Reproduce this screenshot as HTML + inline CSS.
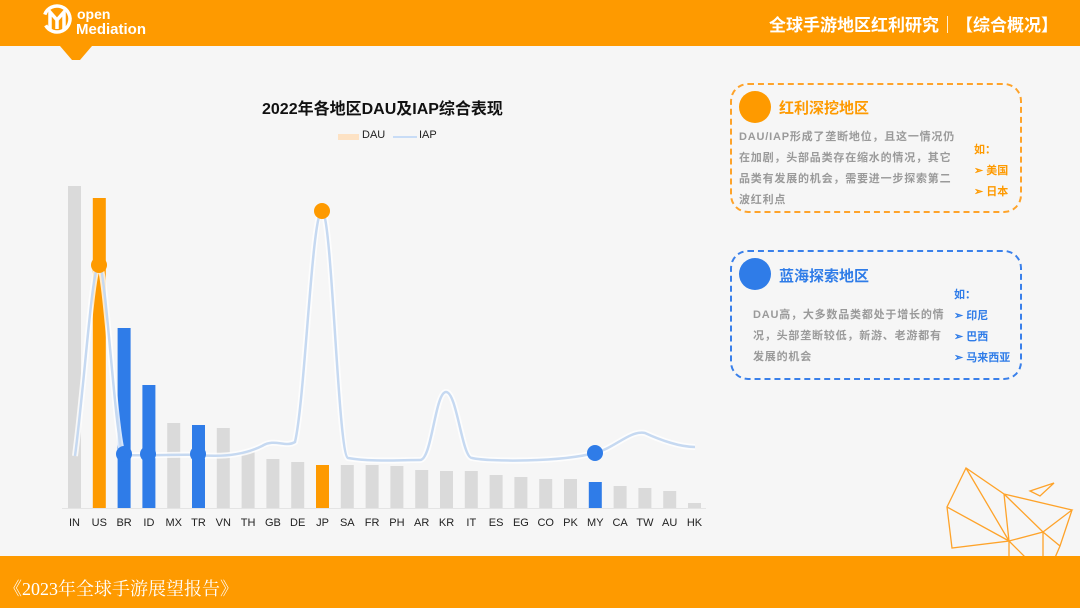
<!DOCTYPE html>
<html><head><meta charset="utf-8"><style>
body{margin:0;width:1080px;height:608px;overflow:hidden;background:#f6f6f6;font-family:"Liberation Sans","Noto Sans CJK SC",sans-serif;position:relative}
.hd{position:absolute;left:0;top:0;width:1080px;height:46px;background:#fe9a00}
.ft{position:absolute;left:0;top:556px;width:1080px;height:52px;background:#fe9a00}
.box{position:absolute;border:2px dashed;border-radius:18px;box-sizing:border-box}
.t{position:absolute;font-weight:bold;white-space:nowrap}
.bt{position:absolute;font-size:11px;line-height:21px;color:#9a9a9a;font-weight:bold;white-space:nowrap;letter-spacing:0.8px}
</style></head><body>
<div class="hd"></div>
<svg style="position:absolute;left:0;top:0" width="1080" height="70">
<polygon points="60,46 92,46 80,60 72,60" fill="#fe9a00"/>
<circle cx="57" cy="19" r="13" fill="none" stroke="#fff" stroke-width="3.5" stroke-dasharray="70 12" transform="rotate(200 57 19)"/>
<path d="M50 29 V12 L57 20 L64 12 V29 M57 20 V29" fill="none" stroke="#fff" stroke-width="3.5"/>
<text x="77" y="19" fill="#fff" font-size="14" font-weight="bold" font-family="Liberation Sans">open</text>
<text x="76" y="34" fill="#fff" font-size="15" font-weight="bold" font-family="Liberation Sans">Mediation</text>
</svg>
<div class="t" style="right:22px;top:11px;color:#fff;font-size:17px">全球手游地区红利研究｜【综合概况】</div>
<div class="t" style="left:262px;top:95px;color:#111;font-size:16px">2022年各地区DAU及IAP综合表现</div>
<div style="position:absolute;left:338px;top:134px;width:21px;height:6px;background:#fde2c4"></div>
<div class="t" style="left:362px;top:129px;font-size:11px;color:#222;font-weight:normal">DAU</div>
<div style="position:absolute;left:393px;top:136px;width:24px;height:2px;background:#c8dcf6"></div>
<div class="t" style="left:419px;top:129px;font-size:11px;color:#222;font-weight:normal">IAP</div>
<svg style="position:absolute;left:0;top:0" width="720" height="540">
<line x1="62" y1="508.5" x2="706" y2="508.5" stroke="#e4e4e4"/>
<g id="bars"></g>
<path d="M75 456 C85 380 92 265 99 265 C106 265 116 455 124 455 C140 456 190 454 198 455 C230 458 250 452 262 446 C275 438 285 448 295 442 C305 400 312 211 322 211 C332 211 338 455 348 458 C370 462 400 460 420 460 C432 460 435 392 446 392 C457 392 462 458 472 458 C490 462 560 462 595 453 C615 448 630 430 645 433 C660 440 680 447 695 447" fill="none" stroke="#fff" stroke-width="6" opacity=".8"/>
<path d="M75 456 C85 380 92 265 99 265 C106 265 116 455 124 455 C140 456 190 454 198 455 C230 458 250 452 262 446 C275 438 285 448 295 442 C305 400 312 211 322 211 C332 211 338 455 348 458 C370 462 400 460 420 460 C432 460 435 392 446 392 C457 392 462 458 472 458 C490 462 560 462 595 453 C615 448 630 430 645 433 C660 440 680 447 695 447" fill="none" stroke="#c6d9f1" stroke-width="2.5"/>
<circle cx="99" cy="265" r="8" fill="#fe9a00"/><circle cx="322" cy="211" r="8" fill="#fe9a00"/>
<circle cx="124" cy="454" r="8" fill="#2f7ce8"/><circle cx="148" cy="454" r="8" fill="#2f7ce8"/><circle cx="198" cy="454" r="8" fill="#2f7ce8"/><circle cx="595" cy="453" r="8" fill="#2f7ce8"/>
</svg>
<script>
var d=[["IN",186,"#dadada"],["US",198,"#fe9a00"],["BR",328,"#2f7ce8"],["ID",385,"#2f7ce8"],["MX",423,"#dadada"],["TR",425,"#2f7ce8"],["VN",428,"#dadada"],["TH",452,"#dadada"],["GB",459,"#dadada"],["DE",462,"#dadada"],["JP",465,"#fe9a00"],["SA",465,"#dadada"],["FR",465,"#dadada"],["PH",466,"#dadada"],["AR",470,"#dadada"],["KR",471,"#dadada"],["IT",471,"#dadada"],["ES",475,"#dadada"],["EG",477,"#dadada"],["CO",479,"#dadada"],["PK",479,"#dadada"],["MY",482,"#2f7ce8"],["CA",486,"#dadada"],["TW",488,"#dadada"],["AU",491,"#dadada"],["HK",503,"#dadada"]];
var s="";d.forEach(function(b,i){var x=74.5+i*24.8;s+='<rect x="'+(x-6.5)+'" y="'+b[1]+'" width="13" height="'+(508-b[1])+'" fill="'+b[2]+'"/><text x="'+x+'" y="526" text-anchor="middle" font-size="11" fill="#222" font-family="Liberation Sans">'+b[0]+'</text>';});
document.getElementById("bars").innerHTML=s;
</script>
<div class="box" style="left:730px;top:83px;width:292px;height:130px;border-color:#fea32a"></div>
<div style="position:absolute;left:739px;top:91px;width:32px;height:32px;border-radius:50%;background:#fe9a00"></div>
<div class="t" style="left:779px;top:97px;font-size:15px;color:#fe9a00">红利深挖地区</div>
<div class="bt" style="left:739px;top:127px">DAU/IAP形成了垄断地位，且这一情况仍<br>在加剧，头部品类存在缩水的情况，其它<br>品类有发展的机会，需要进一步探索第二<br>波红利点</div>
<div class="t" style="left:974px;top:140px;font-size:11px;line-height:21px;color:#fe9a00">如：<br>➢ 美国<br>➢ 日本</div>
<div class="box" style="left:730px;top:250px;width:292px;height:130px;border-color:#3a80ea"></div>
<div style="position:absolute;left:739px;top:258px;width:32px;height:32px;border-radius:50%;background:#2f7ce8"></div>
<div class="t" style="left:779px;top:265px;font-size:15px;color:#2f7ce8">蓝海探索地区</div>
<div class="bt" style="left:753px;top:305px">DAU高，大多数品类都处于增长的情<br>况，头部垄断较低，新游、老游都有<br>发展的机会</div>
<div class="t" style="left:954px;top:285px;font-size:11px;line-height:21px;color:#2f7ce8">如：<br>➢ 印尼<br>➢ 巴西<br>➢ 马来西亚</div>
<svg style="position:absolute;left:930px;top:460px" width="150" height="100" fill="none" stroke="#fea32a" stroke-width="1.3">
<path d="M36 8 L17 47 L22 88 L79 81 L74 34 Z M36 8 L79 81 M17 47 L79 81 M74 34 L142 50 L113 72 L79 81 M74 34 L113 72 L130 86 M142 50 L130 86 L124 100 M113 72 L113 100 M79 81 L79 100 M79 81 L98 100 M100 31 L124 23 L110 36 Z"/>
</svg>
<div class="ft"></div>
<div class="t" style="left:4px;top:575px;color:#fff;font-size:18px;font-weight:normal;font-family:'Liberation Serif','Noto Serif CJK SC',serif">《2023年全球手游展望报告》</div>
</body></html>
